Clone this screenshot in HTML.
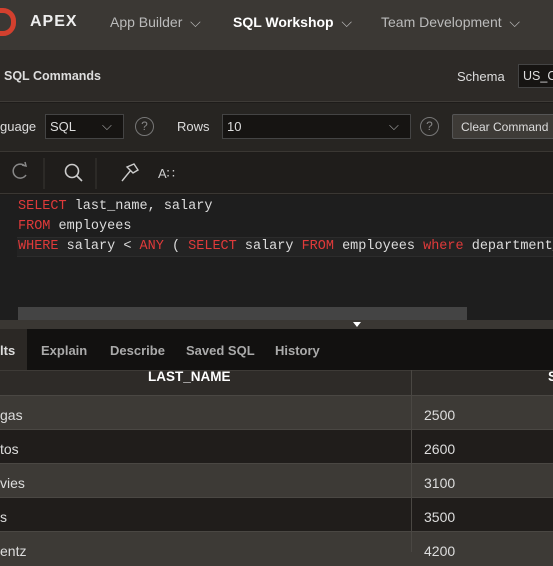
<!DOCTYPE html>
<html><head><style>
*{margin:0;padding:0;box-sizing:border-box}
body{width:553px;height:552px;overflow:hidden;background:#1e1c1a;font-family:"Liberation Sans",sans-serif;position:relative;color:#ddd}
.a{position:absolute;white-space:nowrap}
.mono{font-family:"Liberation Mono",monospace;font-size:13.5px;color:#ddd}
.k{color:#e03a3a}
.t{font-size:13px;font-weight:bold;color:#aaa;top:343px}
.c{font-size:14px;color:#ddd;line-height:1}
</style></head><body>
<div class="a" style="left:0;top:0;width:553px;height:50px;background:#3b3834"></div>
<div class="a" style="left:-14px;top:8px;width:30px;height:28px;border:5px solid #d3402e;border-radius:13px"></div>
<div class="a" style="left:30px;top:13px;font-size:16px;font-weight:bold;color:#eee;letter-spacing:1px">APEX</div>
<div class="a" style="left:110px;top:14px;font-size:14px;color:#bbb">App Builder&nbsp; ⌵</div>
<div class="a" style="left:233px;top:14px;font-size:14px;font-weight:bold;color:#fff">SQL Workshop <span style="font-weight:normal;color:#bbb">&nbsp;⌵</span></div>
<div class="a" style="left:381px;top:14px;font-size:14px;color:#bbb">Team Development&nbsp; ⌵</div>

<div class="a" style="left:0;top:50px;width:553px;height:52px;background:#2d2a27;border-bottom:1px solid #3e3b37"></div>
<div class="a" style="left:4px;top:69px;font-size:12.5px;font-weight:bold;color:#ddd">SQL Commands</div>
<div class="a" style="left:457px;top:69px;font-size:13px;color:#ddd">Schema</div>
<div class="a" style="left:518px;top:64px;width:40px;height:24px;background:#161412;border:1px solid #444;font-size:12.5px;padding:4px 4px;color:#ddd">US_C</div>

<div class="a" style="left:0;top:103px;width:553px;height:49px;background:#272522;border-bottom:1px solid #3a3733"></div>
<div class="a" style="left:0;top:119px;font-size:13px;color:#ddd">guage</div>
<div class="a" style="left:45px;top:114px;width:79px;height:25px;background:#161412;border:1px solid #444;font-size:13px;padding:4px 4px">SQL<span style="position:absolute;left:56px;top:3px;color:#aaa">⌵</span></div>
<div class="a" style="left:135px;top:117px;width:19px;height:19px;border:1.5px solid #777;border-radius:50%;font-size:12px;color:#888;text-align:center;line-height:16px">?</div>
<div class="a" style="left:177px;top:119px;font-size:13px;color:#ddd">Rows</div>
<div class="a" style="left:222px;top:114px;width:189px;height:25px;background:#161412;border:1px solid #444;font-size:13px;padding:4px 4px">10<span style="position:absolute;left:166px;top:3px;color:#aaa">⌵</span></div>
<div class="a" style="left:420px;top:117px;width:19px;height:19px;border:1.5px solid #777;border-radius:50%;font-size:12px;color:#888;text-align:center;line-height:16px">?</div>
<div class="a" style="left:452px;top:114px;width:110px;height:25px;background:#3e3b37;border:1px solid #555;border-radius:2px;font-size:12px;padding:5px 8px;color:#ddd">Clear Command</div>

<div class="a" style="left:0;top:153px;width:553px;height:41px;background:#1f1d1b;border-bottom:1px solid #3a3733"></div>
<svg class="a" style="left:0;top:155px" width="200" height="36"><g fill="none" stroke="#888" stroke-width="1.5"><path d="M25 11 A7 7 0 1 0 26 20"/><path d="M22 10 L26 11 L25 7"/></g><line x1="44" y1="3" x2="44" y2="34" stroke="#3a3733"/><g fill="none" stroke="#ccc" stroke-width="1.6"><circle cx="72" cy="16" r="6.5"/><line x1="77" y1="21" x2="82" y2="26"/></g><line x1="96" y1="3" x2="96" y2="34" stroke="#3a3733"/><g fill="none" stroke="#ccc" stroke-width="1.4"><path d="M122 26 L131 15 M127 12 L134 9 L138 15 L133 18 Z"/></g><text x="158" y="23" fill="#ccc" font-size="13" font-family="Liberation Sans">A∷</text></svg>

<div class="a" style="left:0;top:195px;width:553px;height:125px;background:#1e1e1e"></div>
<div class="a" style="left:17px;top:237px;width:540px;height:20px;background:#232323;border-top:1px solid #2c2c2c;border-bottom:1px solid #2c2c2c"></div>
<div class="a mono" style="left:18px;top:196px">
<div style="height:20px;padding-top:3px"><span class="k">SELECT</span> last_name, salary</div>
<div style="height:20px;padding-top:3px"><span class="k">FROM</span> employees</div>
<div style="height:20px;padding-top:3px"><span class="k">WHERE</span> salary &lt; <span class="k">ANY</span> ( <span class="k">SELECT</span> salary <span class="k">FROM</span> employees <span class="k">where</span> department_</div></div>
<div class="a" style="left:18px;top:307px;width:449px;height:13px;background:#444"></div>
<div class="a" style="left:0;top:320px;width:553px;height:9px;background:#3a3733"></div>
<div class="a" style="left:353px;top:322px;width:0;height:0;border-left:4px solid transparent;border-right:4px solid transparent;border-top:5px solid #fff"></div>

<div class="a" style="left:0;top:329px;width:553px;height:41px;background:#121110"></div>
<div class="a" style="left:0;top:329px;width:27px;height:41px;background:#2b2825"></div>
<div class="a t" style="left:0;color:#ddd">lts</div>
<div class="a t" style="left:41px">Explain</div>
<div class="a t" style="left:110px">Describe</div>
<div class="a t" style="left:186px">Saved SQL</div>
<div class="a t" style="left:275px">History</div>

<div class="a" style="left:0;top:370px;width:553px;height:26px;background:#2e2b28;border-top:1px solid #3e3b37;border-bottom:1px solid #4a4743"></div>
<div class="a" style="left:148px;top:369px;font-size:13.5px;font-weight:bold;color:#fff">LAST_NAME</div>
<div class="a" style="left:548px;top:369px;font-size:13.5px;font-weight:bold;color:#fff">S</div>

<div class="a" style="left:0;top:396px;width:553px;height:34px;background:#3d3a36;border-bottom:1px solid #4a4743"></div>
<div class="a" style="left:0;top:430px;width:553px;height:34px;background:#201d1b;border-bottom:1px solid #4a4743"></div>
<div class="a" style="left:0;top:464px;width:553px;height:34px;background:#3d3a36;border-bottom:1px solid #4a4743"></div>
<div class="a" style="left:0;top:498px;width:553px;height:34px;background:#201d1b;border-bottom:1px solid #4a4743"></div>
<div class="a" style="left:0;top:532px;width:553px;height:34px;background:#3d3a36"></div>
<div class="a" style="left:411px;top:370px;width:1px;height:182px;background:#4a4743"></div>
<div class="a c" style="left:0;top:408px">gas</div>
<div class="a c" style="left:0;top:442px">tos</div>
<div class="a c" style="left:0;top:476px">vies</div>
<div class="a c" style="left:0;top:510px">s</div>
<div class="a c" style="left:0;top:544px">entz</div>
<div class="a c" style="left:424px;top:408px">2500</div>
<div class="a c" style="left:424px;top:442px">2600</div>
<div class="a c" style="left:424px;top:476px">3100</div>
<div class="a c" style="left:424px;top:510px">3500</div>
<div class="a c" style="left:424px;top:544px">4200</div>
</body></html>
